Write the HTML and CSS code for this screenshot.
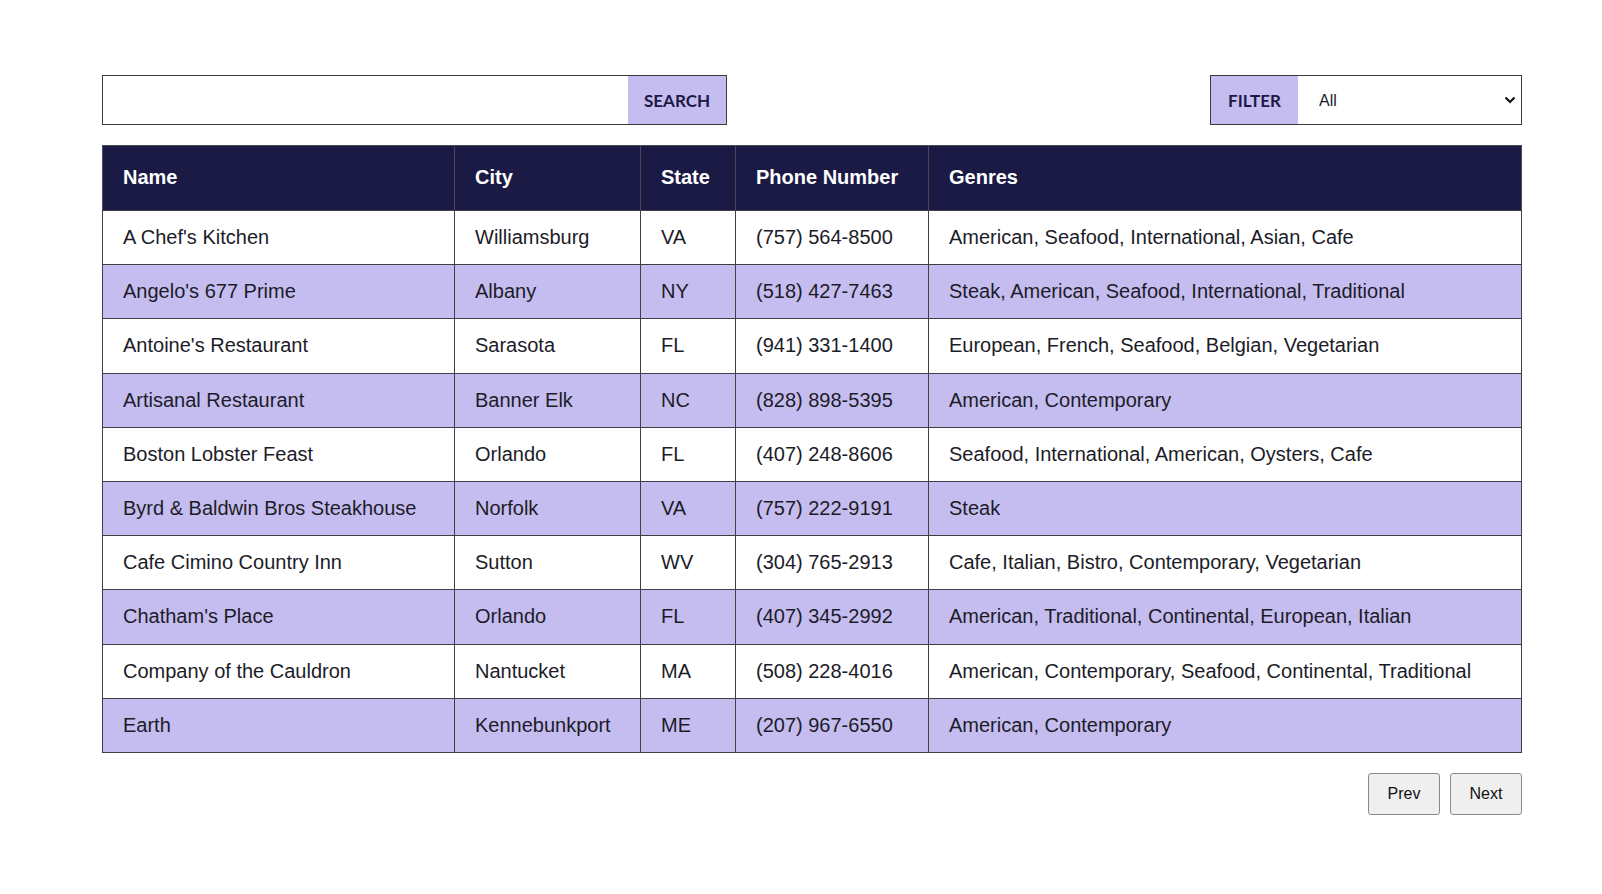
FILE: index.html
```html
<!DOCTYPE html>
<html lang="en">
<head>
<meta charset="utf-8">
<title>Restaurants</title>
<link rel="stylesheet" href="styles.css">
</head>
<body>
<main class="page">
  <div class="toolbar">
    <form class="search">
      <input class="search-input" type="text" aria-label="Search">
      <button class="search-btn" type="button">SEARCH</button>
    </form>
    <div class="filter">
      <span class="filter-label">FILTER</span>
      <select class="filter-select" aria-label="Filter">
        <option>All</option>
      </select>
    </div>
  </div>

  <table class="grid">
    <colgroup>
      <col class="c-name">
      <col class="c-city">
      <col class="c-state">
      <col class="c-phone">
      <col class="c-genres">
    </colgroup>
    <thead>
      <tr><th>Name</th><th>City</th><th>State</th><th>Phone Number</th><th>Genres</th></tr>
    </thead>
    <tbody>
      <tr><td>A Chef's Kitchen</td><td>Williamsburg</td><td>VA</td><td>(757) 564-8500</td><td>American, Seafood, International, Asian, Cafe</td></tr>
      <tr><td>Angelo's 677 Prime</td><td>Albany</td><td>NY</td><td>(518) 427-7463</td><td>Steak, American, Seafood, International, Traditional</td></tr>
      <tr><td>Antoine's Restaurant</td><td>Sarasota</td><td>FL</td><td>(941) 331-1400</td><td>European, French, Seafood, Belgian, Vegetarian</td></tr>
      <tr><td>Artisanal Restaurant</td><td>Banner Elk</td><td>NC</td><td>(828) 898-5395</td><td>American, Contemporary</td></tr>
      <tr><td>Boston Lobster Feast</td><td>Orlando</td><td>FL</td><td>(407) 248-8606</td><td>Seafood, International, American, Oysters, Cafe</td></tr>
      <tr><td>Byrd &amp; Baldwin Bros Steakhouse</td><td>Norfolk</td><td>VA</td><td>(757) 222-9191</td><td>Steak</td></tr>
      <tr><td>Cafe Cimino Country Inn</td><td>Sutton</td><td>WV</td><td>(304) 765-2913</td><td>Cafe, Italian, Bistro, Contemporary, Vegetarian</td></tr>
      <tr><td>Chatham's Place</td><td>Orlando</td><td>FL</td><td>(407) 345-2992</td><td>American, Traditional, Continental, European, Italian</td></tr>
      <tr><td>Company of the Cauldron</td><td>Nantucket</td><td>MA</td><td>(508) 228-4016</td><td>American, Contemporary, Seafood, Continental, Traditional</td></tr>
      <tr><td>Earth</td><td>Kennebunkport</td><td>ME</td><td>(207) 967-6550</td><td>American, Contemporary</td></tr>
    </tbody>
  </table>

  <div class="pager">
    <button class="pager-btn" type="button">Prev</button>
    <button class="pager-btn" type="button">Next</button>
  </div>
</main>
</body>
</html>
```

FILE: styles.css
```css
* { box-sizing: border-box; }

html, body {
  margin: 0;
  padding: 0;
  background: #ffffff;
}

body {
  font-family: "Liberation Sans", Arial, sans-serif;
  color: #1c1c28;
}

.page {
  width: 1420px;
  margin: 0 0 0 102px;
  padding-top: 75px;
}

.toolbar {
  display: flex;
  justify-content: space-between;
  align-items: stretch;
  margin-bottom: 20px;
}

.search {
  display: flex;
  width: 625px;
  height: 50px;
  border: 1px solid #3b3b3b;
  margin: 0;
}

.search-input {
  flex: 1;
  border: none;
  outline: none;
  padding: 0 12px;
  font: 16px "Liberation Sans", Arial, sans-serif;
  background: #fff;
}

.search-btn {
  width: 98px;
  border: none;
  background: #c5bdf0;
  color: #1b1a45;
  font-family: Lato, "Open Sans", sans-serif;
  font-weight: 700;
  font-size: 17px;
  padding: 0;
  cursor: pointer;
}

.filter {
  display: flex;
  width: 312px;
  height: 50px;
  border: 1px solid #3b3b3b;
}

.filter-label {
  display: flex;
  align-items: center;
  justify-content: center;
  width: 87px;
  background: #c5bdf0;
  color: #1b1a45;
  font-family: Lato, "Open Sans", sans-serif;
  font-weight: 700;
  font-size: 17px;
}

.filter-select {
  flex: 1;
  -webkit-appearance: none;
  appearance: none;
  border: none;
  outline: none;
  border-radius: 0;
  background-color: #fff;
  background-image: url("data:image/svg+xml,%3Csvg xmlns='http://www.w3.org/2000/svg' width='12' height='8' viewBox='0 0 12 8'%3E%3Cpath d='M1.5 1.5 L6 6 L10.5 1.5' fill='none' stroke='%23111' stroke-width='2.2'/%3E%3C/svg%3E");
  background-repeat: no-repeat;
  background-position: right 5px center;
  background-size: 12px 8px;
  font: 16px "Liberation Sans", Arial, sans-serif;
  color: #1c1c28;
  padding: 0 28px 0 21px;
}

.grid {
  width: 1419px;
  border-collapse: collapse;
  table-layout: fixed;
  border: 1px solid #3f3f46;
  font-size: 20px;
  line-height: 23px;
}

.c-name { width: 352px; }
.c-city { width: 186px; }
.c-state { width: 95px; }
.c-phone { width: 193px; }
.c-genres { width: 593px; }

.grid th {
  background: #1b1a45;
  color: #ffffff;
  font-weight: 700;
  text-align: left;
  padding: 20px 20px 21px;
  border: 1px solid #4a4a55;
  border-bottom-color: #3f3f46;
}

.grid td {
  padding: 15px 20px;
  height: 54.2px;
  border: 1px solid #3f3f46;
  white-space: nowrap;
}

.grid tbody tr:nth-child(even) td {
  background: #c5bdf0;
}

.pager {
  display: flex;
  justify-content: flex-end;
  gap: 10px;
  margin-top: 20px;
}

.pager-btn {
  width: 72px;
  height: 42px;
  padding: 0;
  font: 16px "Liberation Sans", Arial, sans-serif;
  color: #111;
  background: #efefef;
  border: 1px solid #8a8a8a;
  border-radius: 3px;
}
```
